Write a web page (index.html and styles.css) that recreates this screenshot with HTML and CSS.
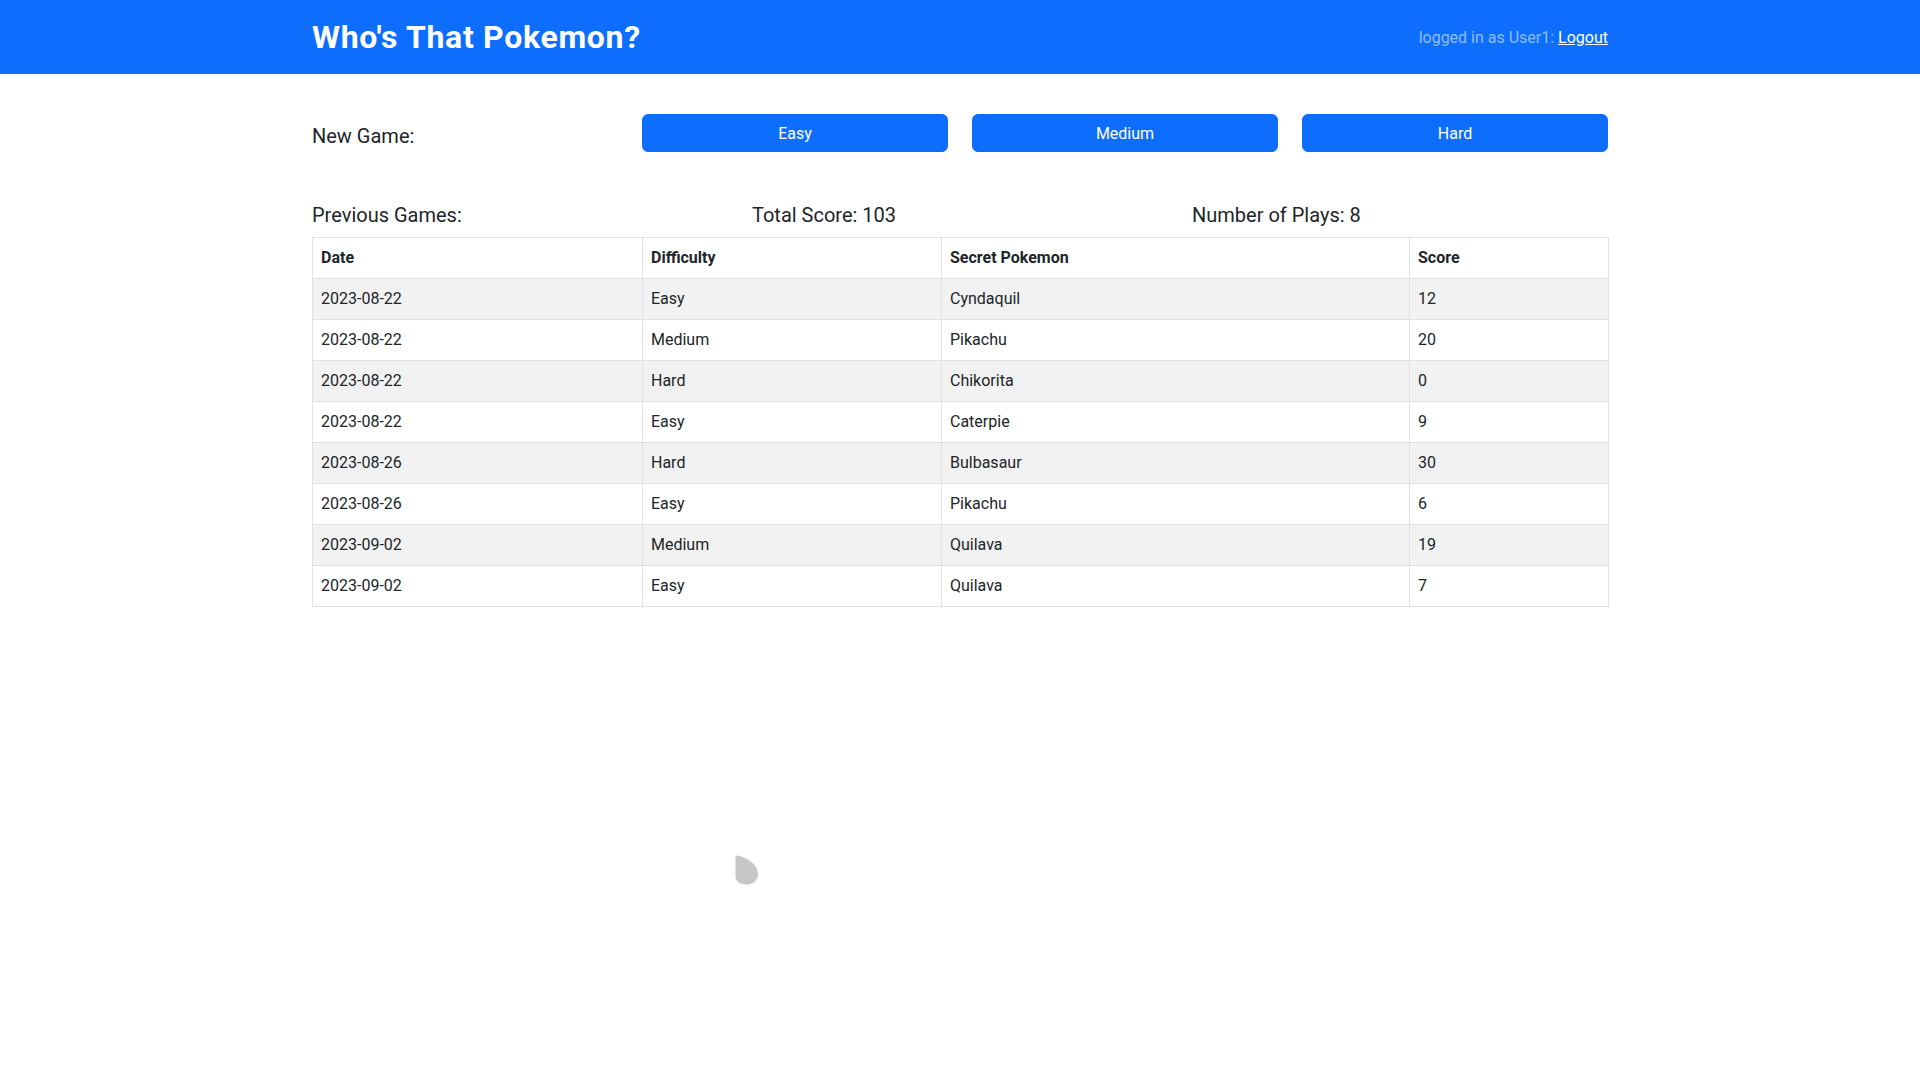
FILE: index.html
```html
<!DOCTYPE html>
<html lang="en">
<head>
<meta charset="utf-8">
<title>Who's That Pokemon?</title>
<link rel="stylesheet" href="styles.css">
</head>
<body>
<header class="navbar">
  <div class="container nav-inner">
    <h1 class="brand">Who's That Pokemon?</h1>
    <div class="user">logged in as User1: <a href="#" class="logout">Logout</a></div>
  </div>
</header>
<main class="container main">
  <div class="new-game">
    <div class="label">New Game:</div>
    <button class="btn">Easy</button>
    <button class="btn">Medium</button>
    <button class="btn">Hard</button>
  </div>
  <div class="stats">
    <div class="label">Previous Games:</div>
    <div class="label">Total Score: 103</div>
    <div class="label">Number of Plays: 8</div>
  </div>
  <table class="games">
    <colgroup>
      <col class="c-date"><col class="c-diff"><col class="c-poke"><col class="c-score">
    </colgroup>
    <thead>
      <tr><th>Date</th><th>Difficulty</th><th>Secret Pokemon</th><th>Score</th></tr>
    </thead>
    <tbody>
      <tr><td>2023-08-22</td><td>Easy</td><td>Cyndaquil</td><td>12</td></tr>
      <tr><td>2023-08-22</td><td>Medium</td><td>Pikachu</td><td>20</td></tr>
      <tr><td>2023-08-22</td><td>Hard</td><td>Chikorita</td><td>0</td></tr>
      <tr><td>2023-08-22</td><td>Easy</td><td>Caterpie</td><td>9</td></tr>
      <tr><td>2023-08-26</td><td>Hard</td><td>Bulbasaur</td><td>30</td></tr>
      <tr><td>2023-08-26</td><td>Easy</td><td>Pikachu</td><td>6</td></tr>
      <tr><td>2023-09-02</td><td>Medium</td><td>Quilava</td><td>19</td></tr>
      <tr><td>2023-09-02</td><td>Easy</td><td>Quilava</td><td>7</td></tr>
    </tbody>
  </table>
</main>
<svg class="drop" width="24" height="30" viewBox="0 0 24 30" aria-hidden="true">
  <path d="M2.5 0.5 C9 1.5 22.5 8 23 18.5 C23.3 25 18.5 29.5 11.5 29.5 C4.5 29.5 0.5 26 0.5 21.5 L0.5 3 C0.5 1.3 1.2 0.4 2.5 0.5 Z" fill="#c6c6c6"/>
</svg>
</body>
</html>
```
FILE: styles.css
```css
* { box-sizing: border-box; }
html, body { margin: 0; padding: 0; }
body {
  font-family: Roboto, "Liberation Sans", sans-serif;
  font-size: 16px;
  line-height: 1.5;
  color: #212529;
  background: #fff;
}
.container {
  width: 1296px;
  margin: 0 auto;
}
.navbar {
  background: #0d6efd;
  height: 74px;
}
.nav-inner {
  height: 74px;
  display: flex;
  align-items: center;
  justify-content: space-between;
}
.brand {
  margin: 0;
  font-size: 32px;
  font-weight: 700;
  line-height: 1.2;
  letter-spacing: 0.7px;
  color: #fff;
}
.user {
  color: rgba(255, 255, 255, 0.55);
  font-size: 16px;
  padding-top: 2px;
}
.logout {
  color: #fff;
  text-decoration: underline;
}
.main {
  padding-top: 40px;
}
.new-game {
  display: grid;
  grid-template-columns: repeat(4, 306px);
  column-gap: 24px;
  height: 38px;
}
.label {
  font-size: 20px;
  line-height: 24px;
}
.new-game .label {
  margin-top: 10px;
}
.btn {
  height: 38px;
  border: 1px solid #0d6efd;
  border-radius: 6px;
  background: #0d6efd;
  color: #fff;
  font-family: inherit;
  font-size: 16px;
  padding: 0 12px;
  cursor: pointer;
}
.stats {
  display: grid;
  grid-template-columns: repeat(3, 416px);
  column-gap: 24px;
  margin-top: 51px;
  margin-bottom: 10px;
}
.games {
  width: 1296px;
  border-collapse: collapse;
  table-layout: fixed;
}
.c-date { width: 330px; }
.c-diff { width: 299px; }
.c-poke { width: 468px; }
.c-score { width: 199px; }
.games th, .games td {
  border: 1px solid #dee2e6;
  padding: 8px 8px;
  text-align: left;
  line-height: 24px;
  font-size: 16px;
}
.games th {
  font-weight: 700;
}
.games tbody tr:nth-child(odd) td {
  background: #f2f2f2;
}
.drop {
  position: absolute;
  left: 735px;
  top: 855px;
  filter: blur(0.4px);
}
```
